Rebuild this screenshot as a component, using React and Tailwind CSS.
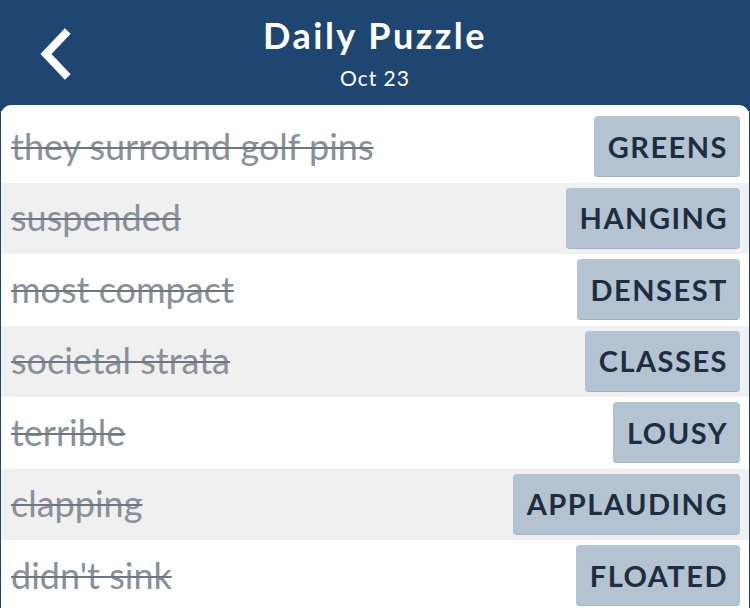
import React from "react";

const clues = [
  { clue: "they surround golf pins", answer: "GREENS" },
  { clue: "suspended", answer: "HANGING" },
  { clue: "most compact", answer: "DENSEST" },
  { clue: "societal strata", answer: "CLASSES" },
  { clue: "terrible", answer: "LOUSY" },
  { clue: "clapping", answer: "APPLAUDING" },
  { clue: "didn't sink", answer: "FLOATED" },
];

const App = () => {
  return (
    <div className="w-[750px] h-[608px] overflow-hidden bg-[#1f4571] font-['Lato',sans-serif]">
      {/* Header */}
      <div className="relative h-[105px] flex flex-col items-center pt-[13px]">
        <button className="absolute left-[34px] top-[28px] w-[40px] h-[52px] flex items-center justify-center">
          <svg width="36" height="52" viewBox="0 0 36 52" fill="none">
            <path
              d="M29 6 L10 26 L29 46"
              stroke="white"
              strokeWidth="8"
              strokeLinecap="square"
              strokeLinejoin="miter"
            />
          </svg>
        </button>
        <h1 className="text-white text-[36px] font-bold leading-[44px] tracking-[2.5px]">Daily Puzzle</h1>
        <p className="text-white text-[21px] leading-[26px] tracking-[1px] mt-[8px]">Oct 23</p>
      </div>

      {/* Clue list */}
      <div className="bg-white rounded-t-[10px] mx-[1px] pt-[6px] h-[503px]">
        {clues.map((item, i) => (
          <div
            key={item.answer}
            className={
              "h-[71.5px] flex items-center justify-between pl-[10px] pr-[9px] " +
              (i % 2 === 1 ? "bg-[#f0f0f0]" : "bg-white")
            }
          >
            <span className="text-[36px] leading-[44px] -mt-[2px] text-[#8a9099] line-through decoration-[#6e7680] decoration-2">
              {item.clue}
            </span>
            <span className="h-[61px] flex items-center pl-[14px] pr-[12px] rounded-[4px] bg-[#b3c3d1] border-b border-[#a3b3c2] text-[#1e2e40] text-[29px] font-bold tracking-[1.5px]">
              {item.answer}
            </span>
          </div>
        ))}
      </div>
    </div>
  );
};

export default App;
